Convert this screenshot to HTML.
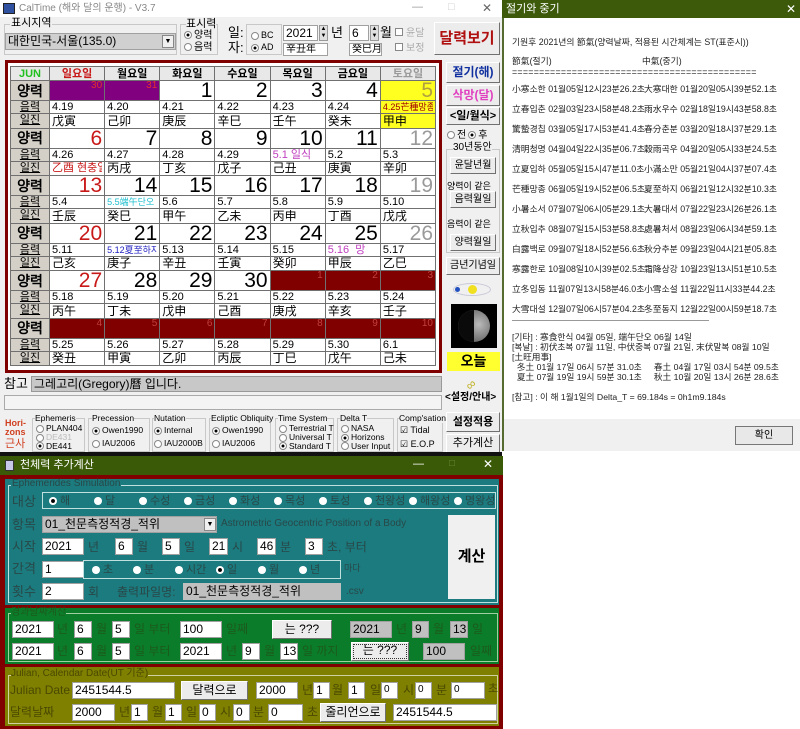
<!DOCTYPE html>
<html><head><meta charset="utf-8">
<style>
*{margin:0;padding:0;box-sizing:border-box}
body{width:800px;height:729px;overflow:hidden;background:#fff;position:relative;font-family:"Liberation Sans","Noto Sans CJK KR","NanumGothic",sans-serif;font-size:12px;color:#000}
.a{position:absolute;white-space:nowrap;line-height:1}
.in{position:absolute;background:#fff;border:1px solid #a0a0a0;font-size:11px;line-height:14px;padding-left:2px;white-space:nowrap;overflow:hidden}
.gr{background:#c0c0c0}
.bt{position:absolute;background:#ececec;border:1px solid #fff;border-right-color:#707070;border-bottom-color:#707070;text-align:center;white-space:nowrap}
.gb{position:absolute;border:1px solid #c8c8c8}
.rd{display:inline-block;width:8px;height:8px;border-radius:50%;border:1px solid #888;background:#fff;vertical-align:middle;margin-right:2px}
.rd.on{background:radial-gradient(#000 30%,#fff 40%)}
.wr{display:inline-block;width:8px;height:8px;border-radius:50%;background:#fff;vertical-align:middle;margin-right:3px}
table.cal{position:absolute;left:10px;top:66px;width:426px;border-collapse:collapse;table-layout:fixed}
table.cal td{border:1px solid #707070;padding:0 2px;overflow:hidden;white-space:nowrap;vertical-align:bottom}
table.cal td div{overflow:hidden}
.hd td{height:14px;font-size:11px;line-height:12px;font-weight:bold;text-align:center;background:#e8e8e8;vertical-align:middle}
.hd td div{height:12px}
.lb{background:#d4d0c8;text-align:center!important;font-weight:bold;vertical-align:middle!important}
.r1 td{height:20px;text-align:right;font-size:21px;line-height:18px;font-family:"Liberation Sans",sans-serif}
.r1 td div{height:18px}
.r2 td{height:13px;font-size:11px;line-height:12px}
.r2 td div{height:12px}
.r3 td{height:14.5px;font-size:12px;line-height:13px}
.r3 td div{height:13px}
.r2 td.lb,.r3 td.lb{font-size:11px;font-weight:normal;text-decoration:underline}
.pu{background:#800080!important;color:#e03030;font-size:10px!important;vertical-align:top!important;line-height:10px!important}
.dr{background:#800000!important;color:#c04040;font-size:10px!important;vertical-align:top!important;line-height:10px!important}
.su{color:#c81818}.sa{color:#9a9a9a}
.sl{position:absolute;left:512px;font-size:8.8px;white-space:nowrap;line-height:1;color:#222}
.sr{position:absolute;left:644px;font-size:8.8px;white-space:nowrap;line-height:1;color:#222}
.tl{color:#294848}
.gl{color:#1c5a1c}
.ol{color:#4a4a00}
</style></head><body>

<!-- MAIN WINDOW -->
<div class="a" style="left:0;top:0;width:502px;height:456px;background:#f0f0f0"></div>
<div class="a" style="left:0;top:0;width:502px;height:17px;background:#fff"></div>
<div class="a" style="left:3px;top:3px;width:12px;height:11px;background:#3050a0;border:1px solid #222"></div>
<div class="a" style="left:19px;top:4px;font-size:10px;color:#888">CalTime (해와 달의 운행) - V3.7</div>
<div class="a" style="left:412px;top:2px;font-size:11px;color:#999">—</div>
<div class="a" style="left:448px;top:2px;font-size:11px;color:#ccc">□</div>
<div class="a" style="left:482px;top:2px;font-size:12px;color:#666">✕</div>

<div class="gb" style="left:4px;top:24px;width:173px;height:31px"></div>
<div class="a" style="left:10px;top:18px;font-size:11px;background:#f0f0f0;padding:0 1px">표시지역</div>
<div class="in gr" style="left:5px;top:33px;width:171px;height:17px;font-size:12px;background:#d0d0d0">대한민국-서울(135.0)</div>
<div class="a" style="left:162px;top:35px;width:12px;height:13px;background:#f0f0f0;border:1px solid #888;font-size:7px;text-align:center;line-height:12px">▼</div>
<div class="gb" style="left:180px;top:24px;width:38px;height:31px"></div>
<div class="a" style="left:186px;top:19px;font-size:11px;background:#f0f0f0">표시력</div>
<div class="a" style="left:184px;top:31px;font-size:10px"><span class="rd on"></span>양력</div>
<div class="a" style="left:184px;top:43px;font-size:10px"><span class="rd"></span>음력</div>
<div class="a" style="left:228px;top:25px;font-size:13px;line-height:15px">일:<br>자:</div>
<div class="gb" style="left:246px;top:24px;width:36px;height:31px"></div>
<div class="a" style="left:251px;top:31px;font-size:9px"><span class="rd"></span>BC</div>
<div class="a" style="left:251px;top:43px;font-size:9px"><span class="rd on"></span>AD</div>
<div class="in" style="left:283px;top:25px;width:35px;height:16px;font-size:12px">2021</div>
<div class="a" style="left:319px;top:25px;width:9px;height:16px;background:#e0e0e0;border:1px solid #999;font-size:6px;line-height:7px;text-align:center">▲<br>▼</div>
<div class="a" style="left:331px;top:26px;font-size:13px">년</div>
<div class="in" style="left:283px;top:43px;width:45px;height:13px;font-size:10px;line-height:11px">辛丑年</div>
<div class="in" style="left:349px;top:25px;width:20px;height:16px;font-size:12px">6</div>
<div class="a" style="left:370px;top:25px;width:9px;height:16px;background:#e0e0e0;border:1px solid #999;font-size:6px;line-height:7px;text-align:center">▲<br>▼</div>
<div class="a" style="left:380px;top:26px;font-size:13px">월</div>
<div class="in" style="left:349px;top:43px;width:33px;height:13px;font-size:10px;line-height:11px">癸巳月</div>
<div class="a" style="left:395px;top:28px;font-size:10px;color:#aaa"><span style="display:inline-block;width:8px;height:8px;border:1px solid #888;background:#fff;margin-right:3px"></span>윤달</div>
<div class="a" style="left:395px;top:43px;font-size:10px;color:#aaa"><span style="display:inline-block;width:8px;height:8px;border:1px solid #888;background:#fff;margin-right:3px"></span>보정</div>
<div class="bt" style="left:434px;top:22px;width:66px;height:33px;font-size:15px;font-weight:bold;color:#b01010;line-height:31px">달력보기</div>

<!-- calendar frame -->
<div class="a" style="left:5px;top:60px;width:437px;height:313px;background:#800000"></div>
<div class="a" style="left:8px;top:63px;width:431px;height:307px;background:#fff"></div>
<table class="cal">
<colgroup><col style="width:39px"><col><col><col><col><col><col><col></colgroup>
<tr class="hd"><td style="color:#20c020"><div>JUN</div></td><td class="su"><div>일요일</div></td><td><div>월요일</div></td><td><div>화요일</div></td><td><div>수요일</div></td><td><div>목요일</div></td><td><div>금요일</div></td><td class="sa"><div>토요일</div></td></tr>

<tr class="r1"><td class="lb" style="font-size:14px"><div>양력</div></td><td class="pu"><div>30</div></td><td class="pu"><div>31</div></td><td><div>1</div></td><td><div>2</div></td><td><div>3</div></td><td><div>4</div></td><td style="background:#ffff20;color:#b0a040"><div>5</div></td></tr>
<tr class="r2"><td class="lb"><div>음력</div></td><td><div>4.19</div></td><td><div>4.20</div></td><td><div>4.21</div></td><td><div>4.22</div></td><td><div>4.23</div></td><td><div>4.24</div></td><td style="background:#ffff20;font-size:9px;color:#a00000"><div>4.25芒種망종</div></td></tr>
<tr class="r3"><td class="lb"><div>일진</div></td><td><div>戊寅</div></td><td><div>己卯</div></td><td><div>庚辰</div></td><td><div>辛巳</div></td><td><div>壬午</div></td><td><div>癸未</div></td><td style="background:#ffff20"><div>甲申</div></td></tr>

<tr class="r1"><td class="lb" style="font-size:14px"><div>양력</div></td><td class="su"><div>6</div></td><td><div>7</div></td><td><div>8</div></td><td><div>9</div></td><td><div>10</div></td><td><div>11</div></td><td class="sa"><div>12</div></td></tr>
<tr class="r2"><td class="lb"><div>음력</div></td><td><div>4.26</div></td><td><div>4.27</div></td><td><div>4.28</div></td><td><div>4.29</div></td><td style="color:#c040c0"><div>5.1 일식</div></td><td><div>5.2</div></td><td><div>5.3</div></td></tr>
<tr class="r3"><td class="lb"><div>일진</div></td><td style="color:#c81818;font-size:11px"><div>乙酉 현충일</div></td><td><div>丙戌</div></td><td><div>丁亥</div></td><td><div>戊子</div></td><td><div>己丑</div></td><td><div>庚寅</div></td><td><div>辛卯</div></td></tr>

<tr class="r1"><td class="lb" style="font-size:14px"><div>양력</div></td><td class="su"><div>13</div></td><td><div>14</div></td><td><div>15</div></td><td><div>16</div></td><td><div>17</div></td><td><div>18</div></td><td class="sa"><div>19</div></td></tr>
<tr class="r2"><td class="lb"><div>음력</div></td><td><div>5.4</div></td><td style="color:#20c0d0;font-size:9px"><div>5.5端午단오</div></td><td><div>5.6</div></td><td><div>5.7</div></td><td><div>5.8</div></td><td><div>5.9</div></td><td><div>5.10</div></td></tr>
<tr class="r3"><td class="lb"><div>일진</div></td><td><div>壬辰</div></td><td><div>癸巳</div></td><td><div>甲午</div></td><td><div>乙未</div></td><td><div>丙申</div></td><td><div>丁酉</div></td><td><div>戊戌</div></td></tr>

<tr class="r1"><td class="lb" style="font-size:14px"><div>양력</div></td><td class="su"><div>20</div></td><td><div>21</div></td><td><div>22</div></td><td><div>23</div></td><td><div>24</div></td><td><div>25</div></td><td class="sa"><div>26</div></td></tr>
<tr class="r2"><td class="lb"><div>음력</div></td><td><div>5.11</div></td><td style="color:#2020c0;font-size:9px"><div>5.12夏至하지</div></td><td><div>5.13</div></td><td><div>5.14</div></td><td><div>5.15</div></td><td style="color:#c040c0"><div>5.16 &nbsp;망</div></td><td><div>5.17</div></td></tr>
<tr class="r3"><td class="lb"><div>일진</div></td><td><div>己亥</div></td><td><div>庚子</div></td><td><div>辛丑</div></td><td><div>壬寅</div></td><td><div>癸卯</div></td><td><div>甲辰</div></td><td><div>乙巳</div></td></tr>

<tr class="r1"><td class="lb" style="font-size:14px"><div>양력</div></td><td class="su"><div>27</div></td><td><div>28</div></td><td><div>29</div></td><td><div>30</div></td><td class="dr"><div>1</div></td><td class="dr"><div>2</div></td><td class="dr"><div>3</div></td></tr>
<tr class="r2"><td class="lb"><div>음력</div></td><td><div>5.18</div></td><td><div>5.19</div></td><td><div>5.20</div></td><td><div>5.21</div></td><td><div>5.22</div></td><td><div>5.23</div></td><td><div>5.24</div></td></tr>
<tr class="r3"><td class="lb"><div>일진</div></td><td><div>丙午</div></td><td><div>丁未</div></td><td><div>戊申</div></td><td><div>己酉</div></td><td><div>庚戌</div></td><td><div>辛亥</div></td><td><div>壬子</div></td></tr>

<tr class="r1"><td class="lb" style="font-size:14px"><div>양력</div></td><td class="dr"><div>4</div></td><td class="dr"><div>5</div></td><td class="dr"><div>6</div></td><td class="dr"><div>7</div></td><td class="dr"><div>8</div></td><td class="dr"><div>9</div></td><td class="dr"><div>10</div></td></tr>
<tr class="r2"><td class="lb"><div>음력</div></td><td><div>5.25</div></td><td><div>5.26</div></td><td><div>5.27</div></td><td><div>5.28</div></td><td><div>5.29</div></td><td><div>5.30</div></td><td><div>6.1</div></td></tr>
<tr class="r3"><td class="lb"><div>일진</div></td><td><div>癸丑</div></td><td><div>甲寅</div></td><td><div>乙卯</div></td><td><div>丙辰</div></td><td><div>丁巳</div></td><td><div>戊午</div></td><td><div>己未</div></td></tr>
</table>

<!-- right column -->
<div class="bt" style="left:446px;top:62px;width:54px;height:21px;font-size:12px;font-weight:bold;color:#1030a0;line-height:19px">절기(해)</div>
<div class="bt" style="left:446px;top:85px;width:54px;height:21px;font-size:12px;font-weight:bold;color:#e040c0;line-height:19px">삭망(달)</div>
<div class="bt" style="left:446px;top:107px;width:54px;height:18px;font-size:11px;font-weight:bold;line-height:16px">&lt;일/월식&gt;</div>
<div class="a" style="left:447px;top:131px;font-size:10px"><span class="rd"></span>전<span class="rd on" style="margin-left:2px"></span>후</div>
<div class="gb" style="left:446px;top:149px;width:54px;height:104px"></div>
<div class="a" style="left:453px;top:143px;font-size:10px;background:#f0f0f0">30년동안</div>
<div class="bt" style="left:450px;top:157px;width:46px;height:17px;font-size:10px;line-height:15px">윤달년월</div>
<div class="a" style="left:447px;top:182px;font-size:9px">양력이 같은</div>
<div class="bt" style="left:450px;top:191px;width:46px;height:17px;font-size:10px;line-height:15px">음력월일</div>
<div class="a" style="left:447px;top:220px;font-size:9px">음력이 같은</div>
<div class="bt" style="left:450px;top:234px;width:46px;height:17px;font-size:10px;line-height:15px">양력월일</div>
<div class="bt" style="left:446px;top:257px;width:54px;height:18px;font-size:10px;line-height:16px">금년기념일</div>
<div class="a" style="left:453px;top:283px;width:38px;height:13px;border:1px solid #c8c8d8;border-radius:50%"></div>
<div class="a" style="left:455px;top:287px;width:5px;height:5px;border-radius:50%;background:#2050c0"></div>
<div class="a" style="left:468px;top:285px;width:9px;height:9px;border-radius:50%;background:#f0e020"></div>
<div class="a" style="left:451px;top:304px;width:46px;height:44px;background:#000"></div>
<div class="a" style="left:458px;top:310px;width:32px;height:32px;border-radius:50%;background:radial-gradient(circle at 65% 45%,#bbb,#666 70%)"></div>
<div class="a" style="left:458px;top:310px;width:16px;height:32px;border-radius:16px 0 0 16px;background:#0a0a0a"></div>
<div class="a" style="left:447px;top:352px;width:53px;height:19px;background:#ffff30;font-size:14px;font-weight:bold;text-align:center;line-height:19px">오늘</div>
<div class="a" style="left:466px;top:378px;font-size:13px;color:#c0b020;transform:rotate(-40deg)">∞</div>
<div class="a" style="left:445px;top:393px;font-size:10px;font-weight:bold">&lt;설정/안내&gt;</div>

<!-- status rows -->
<div class="a" style="left:4px;top:377px;font-size:13px">참고</div>
<div class="a" style="left:31px;top:376px;width:411px;height:16px;background:#c8c8c8;border:1px solid #999;font-size:12px;padding:1px 2px">그레고리(Gregory)曆 입니다.</div>
<div class="a" style="left:4px;top:395px;width:438px;height:15px;background:#f4f4f4;border:1px solid #aaa"></div>

<!-- settings -->
<div class="a" style="left:5px;top:419px;font-size:9px;color:#d04020;font-weight:bold;line-height:9px">Hori-<br>zons</div>
<div class="a" style="left:5px;top:439px;font-size:11px;color:#d04020">근사</div>
<div class="gb" style="left:32px;top:418px;width:53px;height:34px"></div>
<div class="a" style="left:35px;top:414px;font-size:8.5px;background:#f0f0f0">Ephemeris</div>
<div class="a" style="left:36px;top:424px;font-size:8.5px;line-height:8px"><span class="rd"></span>PLAN404<br><span class="rd"></span><span style="color:#bbb">DE431</span><br><span class="rd on"></span>DE441</div>
<div class="gb" style="left:88px;top:418px;width:62px;height:34px"></div>
<div class="a" style="left:92px;top:414px;font-size:8.5px;background:#f0f0f0">Precession</div>
<div class="a" style="left:92px;top:426px;font-size:8.5px"><span class="rd on"></span>Owen1990</div>
<div class="a" style="left:92px;top:439px;font-size:8.5px"><span class="rd"></span>IAU2006</div>
<div class="gb" style="left:152px;top:418px;width:54px;height:34px"></div>
<div class="a" style="left:154px;top:414px;font-size:8.5px;background:#f0f0f0">Nutation</div>
<div class="a" style="left:154px;top:426px;font-size:8.5px"><span class="rd on"></span>Internal</div>
<div class="a" style="left:154px;top:439px;font-size:8.5px"><span class="rd"></span>IAU2000B</div>
<div class="gb" style="left:209px;top:418px;width:62px;height:34px"></div>
<div class="a" style="left:211px;top:414px;font-size:8.5px;background:#f0f0f0">Ecliptic Obliquity</div>
<div class="a" style="left:212px;top:426px;font-size:8.5px"><span class="rd on"></span>Owen1990</div>
<div class="a" style="left:212px;top:439px;font-size:8.5px"><span class="rd"></span>IAU2006</div>
<div class="gb" style="left:275px;top:418px;width:59px;height:34px"></div>
<div class="a" style="left:278px;top:414px;font-size:8.5px;background:#f0f0f0">Time System</div>
<div class="a" style="left:279px;top:424px;font-size:8.5px;line-height:8px"><span class="rd"></span>Terrestrial T<br><span class="rd"></span>Universal T<br><span class="rd on"></span>Standard T</div>
<div class="gb" style="left:337px;top:418px;width:57px;height:34px"></div>
<div class="a" style="left:340px;top:414px;font-size:8.5px;background:#f0f0f0">Delta T</div>
<div class="a" style="left:341px;top:424px;font-size:8.5px;line-height:8px"><span class="rd"></span>NASA<br><span class="rd on"></span>Horizons<br><span class="rd"></span>User Input</div>
<div class="gb" style="left:397px;top:418px;width:46px;height:34px"></div>
<div class="a" style="left:399px;top:414px;font-size:8.5px;background:#f0f0f0">Comp'sation</div>
<div class="a" style="left:400px;top:426px;font-size:9px">☑ Tidal</div>
<div class="a" style="left:400px;top:440px;font-size:9px">☑ E.O.P</div>
<div class="bt" style="left:446px;top:412px;width:54px;height:20px;font-size:11px;font-weight:bold;line-height:18px">설정적용</div>
<div class="bt" style="left:446px;top:434px;width:54px;height:19px;font-size:11px;line-height:17px">추가계산</div>
<div class="a" style="left:0;top:452px;width:502px;height:5px;background:#111"></div>

<!-- RIGHT DIALOG -->
<div class="a" style="left:502px;top:0;width:298px;height:451px;background:#fff;border-left:2px solid #556b2f"></div>
<div class="a" style="left:502px;top:0;width:298px;height:18px;background:#3c5a0a"></div>
<div class="a" style="left:506px;top:4px;font-size:11px;color:#fff">절기와 중기</div>
<div class="a" style="left:786px;top:3px;font-size:12px;color:#fff">✕</div>
<div class="sl" style="top:38px;font-size:8.8px">기원후 2021년의 節氣(양력날짜, 적용된 시간체계는 ST(표준시))</div>
<div class="sl" style="top:57px">節氣(절기)</div><div class="sr" style="top:57px;left:642px">中氣(중기)</div>
<div class="sl" style="top:68px;letter-spacing:0.3px">=============================================</div>
<div class="sl" style="top:85px">小寒소한 01월05일12시23분26.2초</div><div class="sr" style="top:85px">大寒대한 01월20일05시39분52.1초</div>
<div class="sl" style="top:105px">立春입춘 02월03일23시58분48.2초</div><div class="sr" style="top:105px">雨水우수 02월18일19시43분58.8초</div>
<div class="sl" style="top:125px">驚蟄경칩 03월05일17시53분41.4초</div><div class="sr" style="top:125px">春分춘분 03월20일18시37분29.1초</div>
<div class="sl" style="top:145px">清明청명 04월04일22시35분06.7초</div><div class="sr" style="top:145px">穀雨곡우 04월20일05시33분24.5초</div>
<div class="sl" style="top:165px">立夏입하 05월05일15시47분11.0초</div><div class="sr" style="top:165px">小滿소만 05월21일04시37분07.4초</div>
<div class="sl" style="top:185px">芒種망종 06월05일19시52분06.5초</div><div class="sr" style="top:185px">夏至하지 06월21일12시32분10.3초</div>
<div class="sl" style="top:205px">小暑소서 07월07일06시05분29.1초</div><div class="sr" style="top:205px">大暑대서 07월22일23시26분26.1초</div>
<div class="sl" style="top:225px">立秋입추 08월07일15시53분58.8초</div><div class="sr" style="top:225px">處暑처서 08월23일06시34분59.1초</div>
<div class="sl" style="top:245px">白露백로 09월07일18시52분56.6초</div><div class="sr" style="top:245px">秋分추분 09월23일04시21분05.8초</div>
<div class="sl" style="top:265px">寒露한로 10월08일10시39분02.5초</div><div class="sr" style="top:265px">霜降상강 10월23일13시51분10.5초</div>
<div class="sl" style="top:285px">立冬입동 11월07일13시58분46.0초</div><div class="sr" style="top:285px">小雪소설 11월22일11시33분44.2초</div>
<div class="sl" style="top:305px">大雪대설 12월07일06시57분04.2초</div><div class="sr" style="top:305px">冬至동지 12월22일00시59분18.7초</div>
<div class="a" style="left:512px;top:320px;width:197px;height:1px;background:#999"></div>
<div class="sl" style="top:332px;font-size:8.7px;line-height:10px">[기타] : 寒食한식 04월 05일, 端午단오 06월 14일<br>[복날] : 初伏초복 07월 11일, 中伏중복 07월 21일, 末伏말복 08월 10일<br>[土旺用事]<br>&nbsp;&nbsp;冬土 01월 17일 06시 57분 31.0초 &nbsp;&nbsp;&nbsp;&nbsp;春土 04월 17일 03시 54분 09.5초<br>&nbsp;&nbsp;夏土 07월 19일 19시 59분 30.1초 &nbsp;&nbsp;&nbsp;&nbsp;秋土 10월 20일 13시 26분 28.6초</div>
<div class="sl" style="top:393px;font-size:8.7px">[참고] : 이 해 1월1일의 Delta_T = 69.184s = 0h1m9.184s</div>
<div class="a" style="left:504px;top:419px;width:296px;height:32px;background:#f0f0f0"></div>
<div class="bt" style="left:735px;top:426px;width:58px;height:19px;font-size:10px;line-height:17px;border:1px solid #777;background:#e8e8e8">확인</div>

<!-- BOTTOM WINDOW -->
<div class="a" style="left:0;top:456px;width:503px;height:273px;background:#800000"></div>
<div class="a" style="left:0;top:456px;width:503px;height:19px;background:#3b5a08"></div>
<div class="a" style="left:5px;top:460px;width:9px;height:11px;background:#c8c8e8;border:1px solid #333"></div>
<div class="a" style="left:20px;top:460px;font-size:11px;color:#fff">천체력 추가계산</div>
<div class="a" style="left:413px;top:459px;font-size:11px;color:#fff">—</div>
<div class="a" style="left:449px;top:459px;font-size:10px;color:#6a8a3a">□</div>
<div class="a" style="left:483px;top:458px;font-size:12px;color:#fff">✕</div>

<!-- teal -->
<div class="a" style="left:5px;top:479px;width:494px;height:126px;background:#1b7b7f"></div>
<div class="a" style="left:8px;top:485px;width:490px;height:118px;border:1px solid #c0e0e0"></div>
<div class="a tl" style="left:11px;top:479px;font-size:10px;background:#1b7b7f;padding:0 1px">Ephemerides Simulation</div>
<div class="a tl" style="left:12px;top:495px;font-size:13px">대상</div>
<div class="a" style="left:42px;top:492px;width:454px;height:17px;border:1px solid #c0e0e0"></div>
<div class="a tl" style="left:49px;top:496px;font-size:11px"><span class="wr" style="background:radial-gradient(#000 30%,#fff 40%)"></span>해</div>
<div class="a tl" style="left:94px;top:496px;font-size:11px"><span class="wr"></span>달</div>
<div class="a tl" style="left:139px;top:496px;font-size:11px"><span class="wr"></span>수성</div>
<div class="a tl" style="left:184px;top:496px;font-size:11px"><span class="wr"></span>금성</div>
<div class="a tl" style="left:229px;top:496px;font-size:11px"><span class="wr"></span>화성</div>
<div class="a tl" style="left:274px;top:496px;font-size:11px"><span class="wr"></span>목성</div>
<div class="a tl" style="left:319px;top:496px;font-size:11px"><span class="wr"></span>토성</div>
<div class="a tl" style="left:364px;top:496px;font-size:11px"><span class="wr"></span>천왕성</div>
<div class="a tl" style="left:409px;top:496px;font-size:11px"><span class="wr"></span>해왕성</div>
<div class="a tl" style="left:454px;top:496px;font-size:11px"><span class="wr"></span>명왕성</div>
<div class="a tl" style="left:12px;top:518px;font-size:13px">항목</div>
<div class="in gr" style="left:42px;top:516px;width:175px;height:17px;font-size:12px;line-height:15px">01_천문측정적경_적위</div>
<div class="a" style="left:204px;top:518px;width:12px;height:13px;background:#f0f0f0;border:1px solid #888;font-size:7px;text-align:center;line-height:12px">▼</div>
<div class="a tl" style="left:221px;top:519px;font-size:10px">Astrometric Geocentric Position of a Body</div>
<div class="a tl" style="left:12px;top:540px;font-size:13px">시작</div>
<div class="in" style="left:42px;top:538px;width:42px;height:17px;font-size:12px">2021</div><div class="a tl" style="left:88px;top:541px;font-size:12px">년</div>
<div class="in" style="left:115px;top:538px;width:18px;height:17px;font-size:12px">6</div><div class="a tl" style="left:137px;top:541px;font-size:12px">월</div>
<div class="in" style="left:162px;top:538px;width:18px;height:17px;font-size:12px">5</div><div class="a tl" style="left:184px;top:541px;font-size:12px">일</div>
<div class="in" style="left:209px;top:538px;width:19px;height:17px;font-size:12px">21</div><div class="a tl" style="left:232px;top:541px;font-size:12px">시</div>
<div class="in" style="left:257px;top:538px;width:19px;height:17px;font-size:12px">46</div><div class="a tl" style="left:280px;top:541px;font-size:12px">분</div>
<div class="in" style="left:305px;top:538px;width:18px;height:17px;font-size:12px">3</div><div class="a tl" style="left:327px;top:541px;font-size:12px">초, 부터</div>
<div class="a tl" style="left:12px;top:562px;font-size:13px">간격</div>
<div class="in" style="left:42px;top:561px;width:42px;height:17px;font-size:12px">1</div>
<div class="a" style="left:83px;top:560px;width:258px;height:19px;border:1px solid #c0e0e0"></div>
<div class="a tl" style="left:92px;top:565px;font-size:11px"><span class="wr"></span>초</div>
<div class="a tl" style="left:133px;top:565px;font-size:11px"><span class="wr"></span>분</div>
<div class="a tl" style="left:175px;top:565px;font-size:11px"><span class="wr"></span>시간</div>
<div class="a tl" style="left:216px;top:565px;font-size:11px"><span class="wr" style="background:radial-gradient(#000 30%,#fff 40%)"></span>일</div>
<div class="a tl" style="left:258px;top:565px;font-size:11px"><span class="wr"></span>월</div>
<div class="a tl" style="left:299px;top:565px;font-size:11px"><span class="wr"></span>년</div>
<div class="a tl" style="left:344px;top:564px;font-size:9px">마다</div>
<div class="a tl" style="left:12px;top:585px;font-size:13px">횟수</div>
<div class="in" style="left:42px;top:583px;width:42px;height:17px;font-size:12px">2</div>
<div class="a tl" style="left:88px;top:586px;font-size:12px">회</div>
<div class="a tl" style="left:117px;top:586px;font-size:12px">출력파일명:</div>
<div class="in gr" style="left:183px;top:583px;width:158px;height:17px;font-size:12px;border-color:#c0c0c0">01_천문측정적경_적위</div>
<div class="a tl" style="left:346px;top:587px;font-size:10px">.csv</div>
<div class="a" style="left:448px;top:515px;width:47px;height:84px;background:#f0f0f0;font-size:15px;font-weight:bold;text-align:center;line-height:84px">계산</div>

<!-- green -->
<div class="a" style="left:5px;top:608px;width:494px;height:56px;background:#0b7d2a"></div>
<div class="a" style="left:8px;top:613px;width:490px;height:49px;border:1px solid #a0d0a0"></div>
<div class="a gl" style="left:11px;top:608px;font-size:10px;background:#0b7d2a">경과날짜계산</div>
<div class="in" style="left:12px;top:621px;width:42px;height:17px;font-size:12px">2021</div><div class="a gl" style="left:57px;top:623px;font-size:12px">년</div>
<div class="in" style="left:74px;top:621px;width:18px;height:17px;font-size:12px">6</div><div class="a gl" style="left:96px;top:623px;font-size:12px">월</div>
<div class="in" style="left:112px;top:621px;width:18px;height:17px;font-size:12px">5</div><div class="a gl" style="left:134px;top:623px;font-size:12px">일 부터</div>
<div class="in" style="left:180px;top:621px;width:42px;height:17px;font-size:12px">100</div><div class="a gl" style="left:226px;top:623px;font-size:12px">일째</div>
<div class="bt" style="left:272px;top:620px;width:60px;height:19px;font-size:12px;line-height:17px">는 ???</div>
<div class="in gr" style="left:350px;top:621px;width:42px;height:17px;font-size:12px">2021</div><div class="a gl" style="left:396px;top:623px;font-size:12px">년</div>
<div class="in gr" style="left:412px;top:621px;width:17px;height:17px;font-size:12px">9</div><div class="a gl" style="left:433px;top:623px;font-size:12px">월</div>
<div class="in gr" style="left:450px;top:621px;width:18px;height:17px;font-size:12px">13</div><div class="a gl" style="left:472px;top:623px;font-size:12px">일</div>
<div class="in" style="left:12px;top:643px;width:42px;height:17px;font-size:12px">2021</div><div class="a gl" style="left:57px;top:645px;font-size:12px">년</div>
<div class="in" style="left:74px;top:643px;width:18px;height:17px;font-size:12px">6</div><div class="a gl" style="left:96px;top:645px;font-size:12px">월</div>
<div class="in" style="left:112px;top:643px;width:18px;height:17px;font-size:12px">5</div><div class="a gl" style="left:134px;top:645px;font-size:12px">일 부터</div>
<div class="in" style="left:180px;top:643px;width:42px;height:17px;font-size:12px">2021</div><div class="a gl" style="left:226px;top:645px;font-size:12px">년</div>
<div class="in" style="left:242px;top:643px;width:18px;height:17px;font-size:12px">9</div><div class="a gl" style="left:264px;top:645px;font-size:12px">월</div>
<div class="in" style="left:280px;top:643px;width:18px;height:17px;font-size:12px">13</div><div class="a gl" style="left:302px;top:645px;font-size:12px">일 까지</div>
<div class="bt" style="left:351px;top:642px;width:58px;height:19px;font-size:12px;line-height:15px;outline:1px dotted #333;outline-offset:-3px">는 ???</div>
<div class="in gr" style="left:423px;top:643px;width:42px;height:17px;font-size:12px">100</div><div class="a gl" style="left:470px;top:645px;font-size:12px">일째</div>

<!-- olive -->
<div class="a" style="left:5px;top:667px;width:494px;height:59px;background:#7f7f00"></div>
<div class="a" style="left:8px;top:675px;width:490px;height:49px;border:1px solid #d0d0a0"></div>
<div class="a ol" style="left:11px;top:669px;font-size:10px;background:#7f7f00">Julian, Calendar Date(UT 기준)</div>
<div class="a ol" style="left:10px;top:684px;font-size:12px">Julian Date</div>
<div class="in" style="left:72px;top:682px;width:103px;height:17px;font-size:12px">2451544.5</div>
<div class="bt" style="left:181px;top:681px;width:67px;height:19px;font-size:12px;line-height:17px">달력으로</div>
<div class="in" style="left:256px;top:682px;width:42px;height:17px;font-size:12px">2000</div><div class="a ol" style="left:302px;top:684px;font-size:12px">년</div>
<div class="in" style="left:313px;top:682px;width:17px;height:17px;font-size:12px">1</div><div class="a ol" style="left:332px;top:684px;font-size:12px">월</div>
<div class="in" style="left:348px;top:682px;width:17px;height:17px;font-size:12px">1</div><div class="a ol" style="left:370px;top:684px;font-size:12px">일</div>
<div class="in" style="left:381px;top:682px;width:17px;height:17px;font-size:10px">0</div><div class="a ol" style="left:403px;top:684px;font-size:12px">시</div>
<div class="in" style="left:415px;top:682px;width:17px;height:17px;font-size:10px">0</div><div class="a ol" style="left:436px;top:684px;font-size:12px">분</div>
<div class="in" style="left:451px;top:682px;width:34px;height:17px;font-size:10px">0</div><div class="a ol" style="left:488px;top:684px;font-size:11px">초</div>
<div class="a ol" style="left:10px;top:706px;font-size:12px">달력날짜</div>
<div class="in" style="left:72px;top:704px;width:43px;height:17px;font-size:12px">2000</div><div class="a ol" style="left:119px;top:706px;font-size:12px">년</div>
<div class="in" style="left:131px;top:704px;width:17px;height:17px;font-size:12px">1</div><div class="a ol" style="left:152px;top:706px;font-size:12px">월</div>
<div class="in" style="left:165px;top:704px;width:17px;height:17px;font-size:12px">1</div><div class="a ol" style="left:186px;top:706px;font-size:12px">일</div>
<div class="in" style="left:199px;top:704px;width:17px;height:17px;font-size:12px">0</div><div class="a ol" style="left:220px;top:706px;font-size:12px">시</div>
<div class="in" style="left:233px;top:704px;width:17px;height:17px;font-size:12px">0</div><div class="a ol" style="left:253px;top:706px;font-size:12px">분</div>
<div class="in" style="left:268px;top:704px;width:35px;height:17px;font-size:12px">0</div><div class="a ol" style="left:307px;top:706px;font-size:12px">초</div>
<div class="bt" style="left:320px;top:703px;width:66px;height:19px;font-size:12px;line-height:17px">줄리언으로</div>
<div class="in" style="left:393px;top:704px;width:104px;height:17px;font-size:12px">2451544.5</div>
</body></html>
